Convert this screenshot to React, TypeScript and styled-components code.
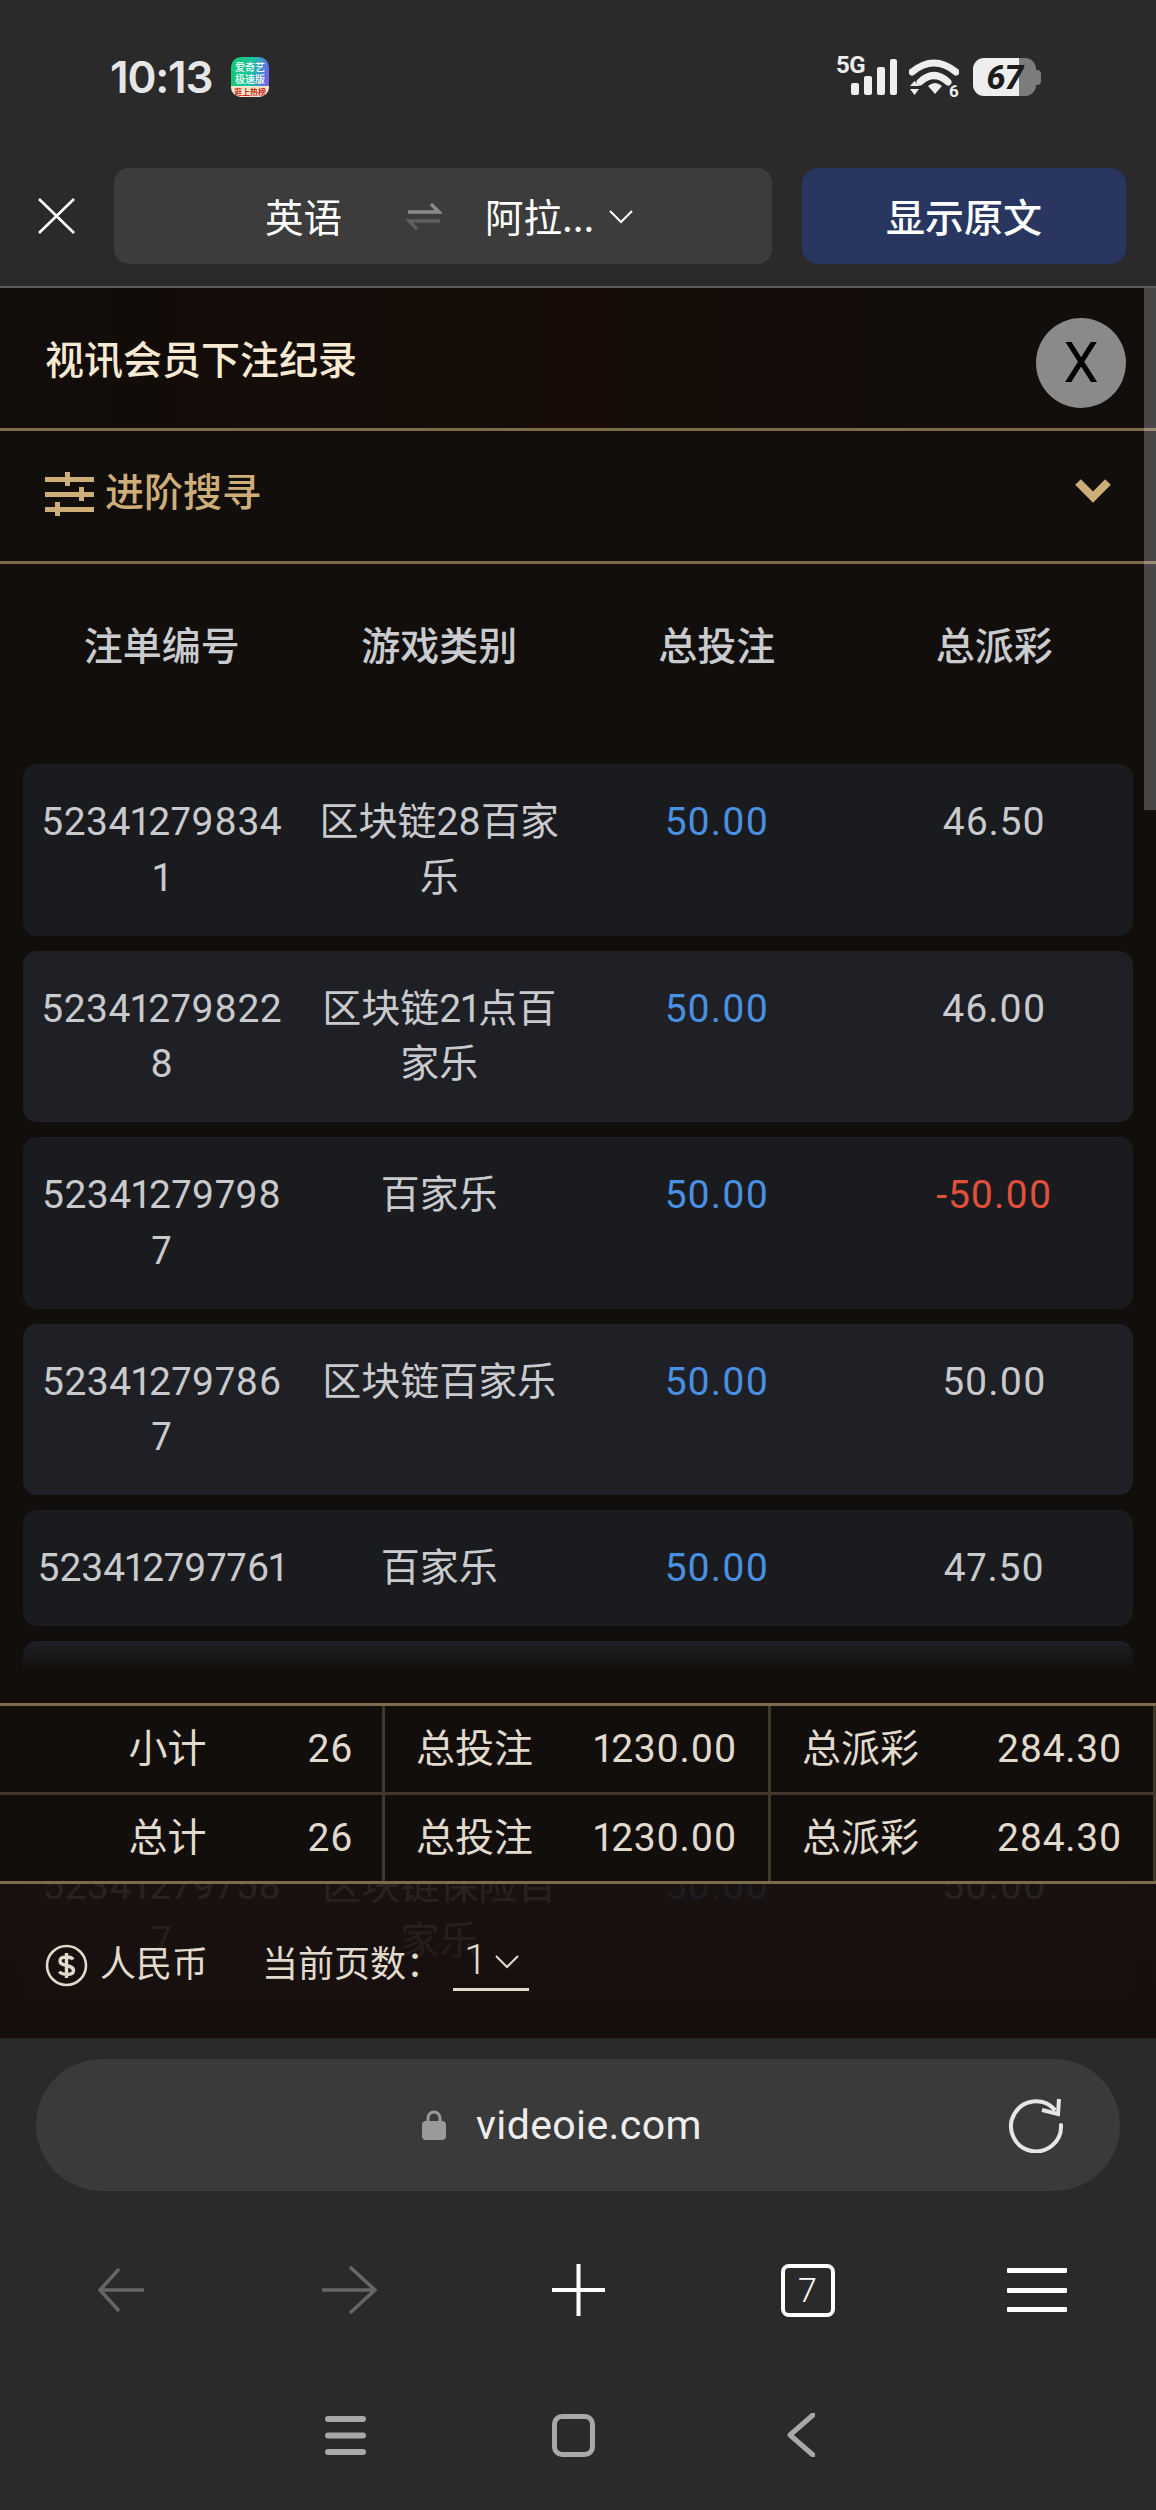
import React from "react";
import styled, { createGlobalStyle } from "styled-components";

const Global = createGlobalStyle`
  html, body { margin: 0; padding: 0; background: #2a2a2a; }
  * { box-sizing: border-box; }
  body { font-family: Roboto, "Noto Sans CJK SC", sans-serif; overflow: hidden; }
`;

const Page = styled.div`
  width: 1156px; height: 2510px; display: flex; flex-direction: column;
  background: #2a2a2a; overflow: hidden;
  & > * { flex: none; }
`;

const StatusBar = styled.div`
  height: 120px; padding: 56px 120px 0 110px; display: flex; justify-content: space-between; align-items: flex-start;
`;
const Left = styled.div`display: flex; align-items: center; gap: 19px;`;
const Time = styled.div`
  font: 600 44px/40px Inter, sans-serif; letter-spacing: -1.2px; color: #e6e6e6; font-variant-numeric: proportional-nums; width: 102px; white-space: nowrap;
`;
const AppIcon = styled.div`
  width: 38px; height: 40px; border-radius: 10px; overflow: hidden; display: flex; flex-direction: column;
  background: linear-gradient(100deg, #12c96c 0%, #1cc4a0 50%, #5f6fe6 85%, #8a5ce0 100%); margin-top: 1px;
`;
const AppName = styled.div`
  flex: 1; color: #fff; font: 500 10px/12px "Noto Sans CJK SC", sans-serif; text-align: center; padding-top: 4px; white-space: nowrap;
`;
const AppStrip = styled.div`
  height: 11px; background: #fbe6c8; color: #c8281e; font: 700 8px/11px "Noto Sans CJK SC", sans-serif; text-align: center; white-space: nowrap;
`;
const Right = styled.div`display: flex; align-items: flex-start;`;
const Signal = styled.div`position: relative; width: 61px; height: 40px; margin-right: 12px;`;
const FiveG = styled.span`
  position: absolute; left: 0; top: -3px; font: 700 24px/24px Roboto, sans-serif; color: #eee; letter-spacing: -0.5px;
`;
const Battery = styled.div`
  position: relative; width: 63px; height: 38px; margin-left: 14px; margin-top: 2px; border-radius: 11px;
  background: linear-gradient(90deg, #eeeeee 0 46px, #7c7c7c 46px); color: #1c1c1c;
  font: italic 800 34px/38px Roboto, sans-serif; text-align: center;
  letter-spacing: -1px;
  &::after { content: ""; position: absolute; left: 63px; top: 12px; width: 5px; height: 15px; background: #7c7c7c; border-radius: 0 4px 4px 0; }
`;

const Toolbar = styled.div`
  height: 168px; padding: 48px 30px 0 38px; display: flex; align-items: flex-start; border-bottom: 2px solid #5a5a5a;
`;
const CloseIcon = styled.svg`width: 37px; height: 36px; margin-top: 30px; margin-right: 39px; flex: none;`;
const LangPill = styled.div`
  width: 658px; height: 96px; border-radius: 15px; background: #3c3c3c; display: flex; align-items: center;
  padding-left: 151px; color: #fff; font: 400 38.5px/46px "Noto Sans CJK SC", sans-serif; margin-right: 30px;
`;
const LangName = styled.span`margin-bottom: 3px;`;
const SwapIcon = styled.svg`width: 36px; height: 30px; margin: 0 43px 0 64px; flex: none;`;
const ToolChevron = styled.svg`width: 24px; height: 14px; margin-left: 15px; margin-top: 2px;`;
const ShowOriginal = styled.div`
  width: 324px; height: 96px; border-radius: 16px; background: #283660; color: #fff; display: flex; align-items: center; justify-content: center;
  font: 500 39px/46px "Noto Sans CJK SC", sans-serif; padding-bottom: 3px;
`;

const Content = styled.div`
  position: relative; height: 1750px; overflow: hidden;
  background: #110e0b;
`;
const ScrollThumb = styled.div`
  position: absolute; right: 0; top: 0; width: 12px; height: 522px; background: rgba(255,255,255,0.24);
`;
const TitleBar = styled.div`
  height: 143px; padding: 30px 30px 21px 45px; display: flex; align-items: center; justify-content: space-between;
  border-bottom: 3px solid #7e6b4c; background: linear-gradient(90deg, #110d0a, #170c07 50%, #110e0b 90%);
`;
const Title = styled.div`
  font: 500 39px/46px "Noto Sans CJK SC", sans-serif; color: #f7e9d2; margin-bottom: 12px;
`;
const CloseCircle = styled.div`
  width: 90px; height: 90px; border-radius: 50%; background: #8a8a8a; color: #000; display: flex; align-items: center; justify-content: center;
  font: 400 56px/56px Roboto, sans-serif;
`;
const SearchBar = styled.div`
  height: 133px; padding: 0 45px; display: flex; align-items: center; border-bottom: 3px solid #7e6b4c; color: #cdae78;
  font: 500 39px/46px "Noto Sans CJK SC", sans-serif;
`;
const SliderIcon = styled.svg`width: 49px; height: 44px; margin-bottom: 4px;`;
const SearchLabel = styled.span`flex: 1; margin-left: 11px; margin-bottom: 15px;`;
const Caret = styled.svg`width: 36px; height: 25px; margin-bottom: 10px;`;

const Columns = styled.div`
  display: grid; grid-template-columns: repeat(4, 277.5px); margin: 0 23px;
`;
const HeadRow = styled(Columns)`
  height: 158px; margin-bottom: 42px; align-items: center; text-align: center; color: #c9cbce;
  font: 500 39px/46px "Noto Sans CJK SC", sans-serif;
`;
const Row = styled(Columns)<{ $even?: boolean; $blank?: boolean }>`
  min-height: ${(p) => (p.$blank ? "171.5px" : "116px")}; padding: 31px 0 29.5px; margin-bottom: 15px; border-radius: 14px;
  background: ${(p) => (p.$even ? "#1f2026" : "#1a1b1e")};
  color: #c8cacd;
`;
const Cell = styled.div<{ $color?: string; $num?: boolean }>`
  padding: 0 16px; text-align: center; word-break: break-all; color: ${(p) => p.$color || "inherit"};
  font: 400 39px/55.5px Roboto, "Noto Sans CJK SC", sans-serif; font-variant-numeric: proportional-nums;
  letter-spacing: ${(p) => (p.$num ? "0.8px" : "0")};
`;
const IdCell = styled(Cell)<{ $fits?: boolean }>`
  padding: 0 12px; letter-spacing: ${(p) => (p.$fits ? "0" : "0.5px")};
  white-space: ${(p) => (p.$fits ? "nowrap" : "normal")};
`;

const Footer = styled.div`
  position: absolute; left: 0; right: 0; bottom: 0; height: 398px; padding-top: 63px;
  background:
    linear-gradient(180deg, rgba(17,14,11,0) 0, #110e0b 32px, #110e0b 241px, rgba(23,16,14,0.9) 241px, rgba(22,15,13,0.96) 100%);
`;
const Summary = styled.div`
  border-top: 3px solid #7e6b4c; border-bottom: 3px solid #7e6b4c; background: #110e0b;
`;
const SummaryRow = styled.div<{ $first?: boolean }>`
  display: grid; grid-template-columns: 385px 386px 382px; height: ${(p) => (p.$first ? "89px" : "86px")};
  ${(p) => p.$first && "border-bottom: 3px solid #413829;"}
  border-right: 3px solid #413829;
  color: #e2dbcd; font: 400 39px/46px Roboto, "Noto Sans CJK SC", sans-serif; font-variant-numeric: proportional-nums;
`;
const SumCell = styled.div<{ $first?: boolean }>`
  display: flex; align-items: center; justify-content: ${(p) => (p.$first ? "flex-end" : "space-between")};
  gap: ${(p) => (p.$first ? "101px" : "0")}; padding: 0 ${(p) => (p.$first ? "29px" : "31px")} 0 31px;
  border-right: 3px solid #413829;
  &:last-child { border-right: 0; }
`;
const SumValue = styled.span`letter-spacing: 0.6px;`;
const Pager = styled.div`
  display: flex; align-items: center; padding: 55px 0 0 45px; color: #e2dbcd; font: 400 36px/46px Roboto, "Noto Sans CJK SC", sans-serif;
`;
const Dollar = styled.svg`width: 43px; height: 43px; margin-right: 12px; flex: none;`;
const PageLabel = styled.span`margin-left: 54px; margin-right: 11px; white-space: nowrap;`;
const PageSelect = styled.div`
  width: 76px; height: 58px; border-bottom: 3px solid #e2dbcd; display: flex; align-items: flex-start; padding: 4px 0 0 11px; margin-top: -6px;
  font: 300 42px/46px Roboto, sans-serif;
`;
const PageChevron = styled.svg`width: 24px; height: 14px; margin: 18px 0 0 8px;`;

const BrowserBar = styled.div`
  height: 222px; padding: 21px 36px 0;
`;
const AddressBar = styled.div`
  position: relative; height: 132px; width: 1084px; border-radius: 66px; background: #3a3a3a; display: flex; align-items: center;
  padding-left: 386px; color: #eee; font: 400 41px/46px Roboto, sans-serif; letter-spacing: 0.4px;
`;
const Lock = styled.svg`width: 24px; height: 30px; margin-right: 30px; flex: none;`;
const Refresh = styled.svg`position: absolute; left: 972px; top: 38px; width: 56px; height: 56px;`;
const BrowserNav = styled.div`
  display: grid; grid-template-columns: repeat(5, 229px); justify-items: center; align-items: center; margin-left: 6px; height: 60px;
`;
const NavIcon = styled.svg<{ $w: number; $h: number }>`width: ${(p) => p.$w}px; height: ${(p) => p.$h}px;`;
const TabBox = styled.div`
  width: 54px; height: 53px; border: 4px solid #fff; border-radius: 8px; color: #fff; display: flex; align-items: center; justify-content: center;
  font: 300 34px/40px Roboto, sans-serif;
`;
const SystemNav = styled.div`
  display: grid; grid-template-columns: repeat(3, 228px); justify-content: center; justify-items: center; align-items: center; height: 46px; margin-top: 92px; padding-right: 10px;
`;
const HomeKey = styled.div`width: 43px; height: 43px; border: 5px solid #a8a8a8; border-radius: 10px;`;

const rows = [
  ["523412798341", "区块链28百家乐", "50.00", "46.50"],
  ["523412798228", "区块链21点百家乐", "50.00", "46.00"],
  ["523412797987", "百家乐", "50.00", "-50.00"],
  ["523412797867", "区块链百家乐", "50.00", "50.00"],
  ["523412797761", "百家乐", "50.00", "47.50"],
  null,
  ["523412797587", "区块链保险百家乐", "50.00", "50.00"],
];

const Chevron = () => <polyline points="1,1 12,12 23,1" fill="none" stroke="currentColor" strokeWidth="2" />;

export default function App() {
  return (
    <Page>
      <Global />
      <StatusBar>
        <Left>
          <Time>10:13</Time>
          <AppIcon>
            <AppName>爱奇艺<br />极速版</AppName>
            <AppStrip>逛上热榜</AppStrip>
          </AppIcon>
        </Left>
        <Right>
          <Signal>
            <FiveG>5G</FiveG>
            <svg width="61" height="40" viewBox="0 0 61 40" fill="#eee">
              <rect x="15" y="27" width="8" height="12" rx="2" />
              <rect x="28" y="20" width="8" height="19" rx="2" />
              <rect x="41" y="11" width="8" height="28" rx="2" />
              <rect x="54" y="3" width="7" height="36" rx="2" />
            </svg>
          </Signal>
          <svg width="50" height="46" viewBox="0 0 50 46" fill="none">
            <path d="M3 16 Q25 -2 47 16" stroke="#eee" strokeWidth="7" strokeLinecap="round" />
            <path d="M11 26 Q25 13 39 26" stroke="#eee" strokeWidth="7" strokeLinecap="round" />
            <path d="M19 30 Q26 24 33 30 L26 38 Z" fill="#eee" />
            <path d="M1 30 L5.5 25 L10 30 Z M1 33 L10 33 L5.5 39 Z" fill="#eee" />
            <text x="40" y="41" fontFamily="Roboto, sans-serif" fontWeight="700" fontSize="17" fill="#eee">6</text>
          </svg>
          <Battery>67</Battery>
        </Right>
      </StatusBar>

      <Toolbar>
        <CloseIcon viewBox="0 0 37 36">
          <path d="M1 1 L36 35 M36 1 L1 35" stroke="#fff" strokeWidth="2.6" fill="none" />
        </CloseIcon>
        <LangPill>
          <LangName>英语</LangName>
          <SwapIcon viewBox="0 0 36 30" fill="none">
            <path d="M2 11 H33 L25 3" stroke="#8a8a8a" strokeWidth="3.5" />
            <path d="M34 20 H3 L11 28" stroke="#5f5f5f" strokeWidth="3.5" />
          </SwapIcon>
          <LangName>阿拉...</LangName>
          <ToolChevron viewBox="0 0 24 14" color="#fff"><Chevron /></ToolChevron>
        </LangPill>
        <ShowOriginal>显示原文</ShowOriginal>
      </Toolbar>

      <Content>
        <TitleBar>
          <Title>视讯会员下注纪录</Title>
          <CloseCircle>X</CloseCircle>
        </TitleBar>
        <SearchBar>
          <SliderIcon viewBox="0 0 49 44" fill="#cdae78">
            <rect x="0" y="5" width="49" height="5" />
            <rect x="0" y="20" width="49" height="5" />
            <rect x="0" y="35" width="49" height="5" />
            <rect x="20" y="0" width="5" height="14" />
            <rect x="34" y="15" width="5" height="14" />
            <rect x="10" y="30" width="5" height="14" />
          </SliderIcon>
          <SearchLabel>进阶搜寻</SearchLabel>
          <Caret viewBox="0 0 36 25" fill="none">
            <path d="M3 3 L18 18 L33 3" stroke="#cdae78" strokeWidth="8" />
          </Caret>
        </SearchBar>
        <HeadRow>
          <span>注单编号</span>
          <span>游戏类别</span>
          <span>总投注</span>
          <span>总派彩</span>
        </HeadRow>
        {rows.map((r, i) =>
          r ? (
            <Row key={i} $even={i % 2 === 1}>
              <IdCell $fits={r[0] === "523412797761"}>{r[0]}</IdCell>
              <Cell>{r[1]}</Cell>
              <Cell $num $color="#4a90e2">{r[2]}</Cell>
              <Cell $num $color={r[3].startsWith("-") ? "#e2503c" : undefined}>{r[3]}</Cell>
            </Row>
          ) : (
            <Row key={i} $even $blank />
          )
        )}
        <Footer>
          <Summary>
            <SummaryRow $first>
              <SumCell $first><span>小计</span><SumValue>26</SumValue></SumCell>
              <SumCell><span>总投注</span><SumValue>1230.00</SumValue></SumCell>
              <SumCell><span>总派彩</span><SumValue>284.30</SumValue></SumCell>
            </SummaryRow>
            <SummaryRow>
              <SumCell $first><span>总计</span><SumValue>26</SumValue></SumCell>
              <SumCell><span>总投注</span><SumValue>1230.00</SumValue></SumCell>
              <SumCell><span>总派彩</span><SumValue>284.30</SumValue></SumCell>
            </SummaryRow>
          </Summary>
          <Pager>
            <Dollar viewBox="0 0 43 43" fill="none">
              <circle cx="21.5" cy="21.5" r="19.5" stroke="#e2dbcd" strokeWidth="2.6" />
              <path d="M28 15.5 C26.5 12.5 15 11.5 15 17 C15 23 28.5 20 28.5 26.5 C28.5 32 16.5 31 14.5 27.5 M21.5 9 V34" stroke="#e2dbcd" strokeWidth="3.4" />
            </Dollar>
            <span>人民币</span>
            <PageLabel>当前页数：</PageLabel>
            <PageSelect>
              <span>1</span>
              <PageChevron viewBox="0 0 24 14" color="#e2dbcd"><Chevron /></PageChevron>
            </PageSelect>
          </Pager>
        </Footer>
        <ScrollThumb />
      </Content>

      <BrowserBar>
        <AddressBar>
          <Lock viewBox="0 0 24 30">
            <path d="M6 13 V8 a6 6 0 0 1 12 0 V13" stroke="#9a9a9a" strokeWidth="3" fill="none" />
            <rect x="0" y="11" width="24" height="19" rx="4" fill="#9a9a9a" />
          </Lock>
          videoie.com
          <Refresh viewBox="0 0 56 56" fill="none">
            <path d="M46 12 A25 25 0 1 0 53 28" stroke="#e6e6e6" strokeWidth="4" strokeLinecap="round" />
            <path d="M34 13 L50 17 L51 2" stroke="#e6e6e6" strokeWidth="4" fill="none" />
          </Refresh>
        </AddressBar>
      </BrowserBar>
      <BrowserNav>
        <NavIcon $w={46} $h={44} viewBox="0 0 46 44" fill="none">
          <path d="M21 1 L2 22 L21 43 M2 22 H46" stroke="#666" strokeWidth="3.5" />
        </NavIcon>
        <NavIcon $w={55} $h={48} viewBox="0 0 55 48" fill="none">
          <path d="M28 1 L53 24 L28 47 M0 24 H53" stroke="#666" strokeWidth="3.5" />
        </NavIcon>
        <NavIcon $w={53} $h={52} viewBox="0 0 53 52" fill="none">
          <path d="M26.5 0 V52 M0 26 H53" stroke="#fff" strokeWidth="4" />
        </NavIcon>
        <TabBox>7</TabBox>
        <NavIcon $w={60} $h={44} viewBox="0 0 60 44" fill="#fff">
          <rect y="0" width="60" height="5" rx="1" />
          <rect y="20" width="60" height="5" rx="1" />
          <rect y="39" width="60" height="5" rx="1" />
        </NavIcon>
      </BrowserNav>
      <SystemNav>
        <NavIcon $w={41} $h={39} viewBox="0 0 41 39" fill="#a8a8a8">
          <rect y="0" width="41" height="6" rx="3" />
          <rect y="16.5" width="41" height="6" rx="3" />
          <rect y="33" width="41" height="6" rx="3" />
        </NavIcon>
        <HomeKey />
        <NavIcon $w={28} $h={44} viewBox="0 0 28 44" fill="none">
          <path d="M26 2 L3 22 L26 42" stroke="#a8a8a8" strokeWidth="5" strokeLinecap="round" strokeLinejoin="round" />
        </NavIcon>
      </SystemNav>
    </Page>
  );
}
